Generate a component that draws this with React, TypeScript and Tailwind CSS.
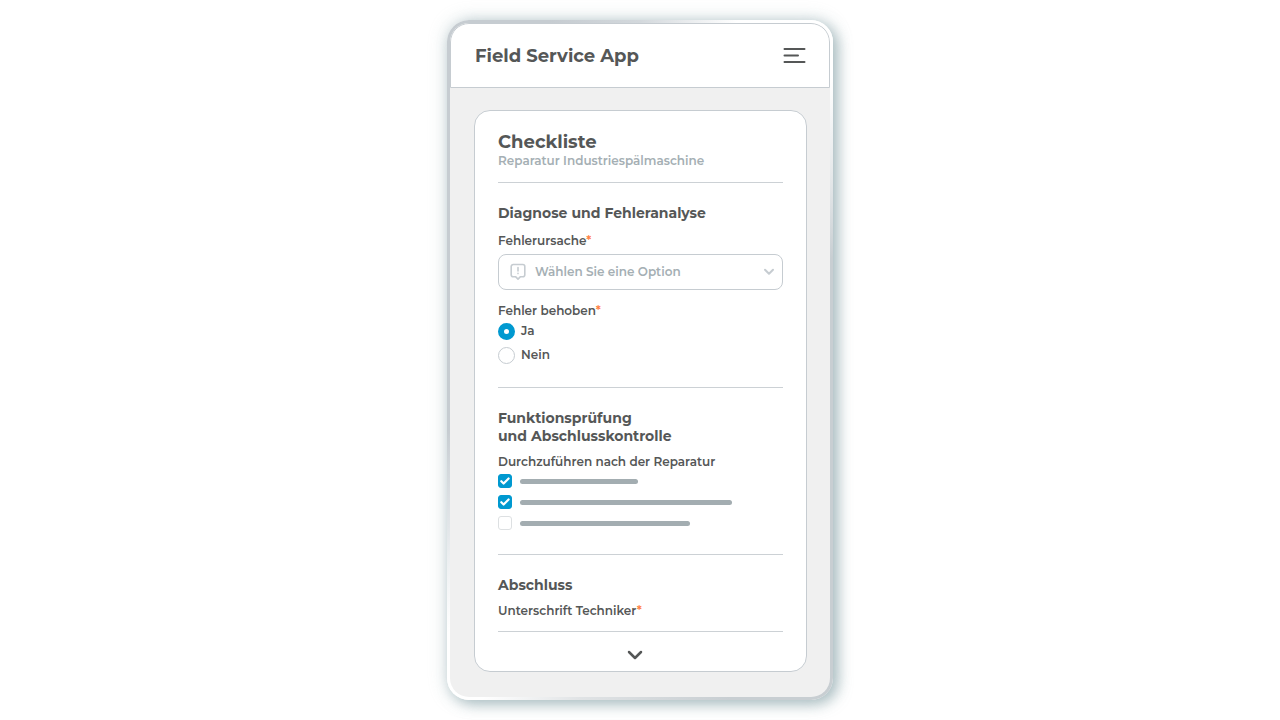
import { useState } from 'react';
import type { ReactNode } from 'react';

const tasks = [
  { id: 'task-1', name: 'Aufgabe 1', bar: 'w-[118px]', done: true },
  { id: 'task-2', name: 'Aufgabe 2', bar: 'w-[212px]', done: true },
  { id: 'task-3', name: 'Aufgabe 3', bar: 'w-[170px]', done: false },
];

function Required() {
  return <span className="text-[#ff7f45]">*</span>;
}

function Section({ title, children }: { title: ReactNode; children: ReactNode }) {
  return (
    <section className="border-t border-[#ccd1d5] pt-[21px]">
      <h3 className="text-sm leading-[18px] font-bold">{title}</h3>
      {children}
    </section>
  );
}

export default function App() {
  const [cause, setCause] = useState('');
  const [fixed, setFixed] = useState('ja');
  const [checked, setChecked] = useState(tasks.map((t) => t.done));

  const toggle = (index: number) => {
    setChecked(checked.map((c, i) => (i === index ? !c : c)));
  };

  return (
    <div className="min-h-screen bg-white py-5 font-['Montserrat','Inter',sans-serif] text-[#555757]">
      {/* Phone frame */}
      <div className="mx-auto w-full max-w-[386px] rounded-[22px] bg-[conic-gradient(#d3d8dc_0deg,#ffffff_16deg,#ffffff_34deg,#f0f2f3_40deg,#c8ced2_62deg,#c8ced2_165deg,#e0e3e5_190deg,#ffffff_205deg,#ffffff_215deg,#e3e7ea_228deg,#c6ccd1_250deg,#c6ccd1_345deg,#d3d8dc_360deg)] p-[3px] shadow-[5px_4px_14px_0px_rgba(130,158,164,0.6),0_0_18px_rgba(160,182,188,0.45)]">
        <div className="overflow-hidden rounded-[19px] bg-[#f0f0f0]">
          <header className="flex h-[65px] items-center justify-between rounded-t-[19px] border border-[#c6ccd1] bg-white pr-[23px] pl-6">
            <h1 className="text-lg leading-6 font-bold">Field Service App</h1>
            <button type="button" aria-label="Menü">
              <svg width="23" height="17" viewBox="0 0 23 17" fill="none" stroke="currentColor" strokeWidth="2" strokeLinecap="round">
                <path d="M1.5 2h20M1.5 8.5h13.5M1.5 15h20" />
              </svg>
            </button>
          </header>

          <main className="pt-[22px] pr-[23px] pb-[25px] pl-6">
            <div className="rounded-2xl border border-[#c6ccd1] bg-white px-[23px] pt-[21px]">
              <div className="pb-3">
                <h2 className="text-lg leading-5 font-bold">Checkliste</h2>
                <p className="text-xs leading-[18px] font-semibold text-[#a5afb4]">Reparatur Industriespälmaschine</p>
              </div>

              <Section title="Diagnose und Fehleranalyse">
                <label htmlFor="cause" className="mt-[11px] block text-xs leading-4 font-semibold">
                  Fehlerursache<Required />
                </label>
                <div className="relative mt-[5px]">
                  <select
                    id="cause"
                    value={cause}
                    onChange={(e) => setCause(e.target.value)}
                    className="block h-9 w-full appearance-none rounded-lg border border-[#c6ccd1] bg-white pr-8 pl-9 text-xs font-semibold text-[#a5afb4]"
                  >
                    <option value="">Wählen Sie eine Option</option>
                    <option value="mechanik">Mechanik</option>
                    <option value="elektrik">Elektrik</option>
                  </select>
                  <svg className="pointer-events-none absolute top-[9px] left-3" width="16" height="18" viewBox="0 0 16 18" fill="none" stroke="#c6ccd1" strokeWidth="1.6" strokeLinejoin="round" strokeLinecap="round">
                    <path d="M3.2 1.5h9.6a2 2 0 0 1 2 2v8.2a2 2 0 0 1-2 2h-2.3L8 16.1l-2.5-2.4H3.2a2 2 0 0 1-2-2V3.5a2 2 0 0 1 2-2Z" />
                    <path d="M8 4.6v3.4M8 10.4v.2" />
                  </svg>
                  <svg className="pointer-events-none absolute top-[14px] right-2" width="12" height="8" viewBox="0 0 12 8" fill="none" stroke="#c6ccd1" strokeWidth="2" strokeLinecap="round" strokeLinejoin="round">
                    <path d="M2 1.8l4 4 4-4" />
                  </svg>
                </div>

                <fieldset className="mt-[13px] pb-[23px]">
                  <legend className="text-xs leading-4 font-semibold">
                    Fehler behoben<Required />
                  </legend>
                  <div className="mt-[3px] flex flex-col gap-[6px]">
                    {[
                      { value: 'ja', label: 'Ja' },
                      { value: 'nein', label: 'Nein' },
                    ].map((o) => (
                      <label key={o.value} className="flex h-[18px] items-center gap-[6px] text-xs leading-4 font-semibold">
                        <input
                          type="radio"
                          name="fixed"
                          value={o.value}
                          checked={fixed === o.value}
                          onChange={() => setFixed(o.value)}
                          className="size-[17px] appearance-none rounded-full border border-[#c6ccd1] bg-white checked:border-[6px] checked:border-[#0099d0]"
                        />
                        {o.label}
                      </label>
                    ))}
                  </div>
                </fieldset>
              </Section>

              <Section title={<>Funktionsprüfung<br />und Abschlusskontrolle</>}>
                <p className="mt-[9px] text-xs leading-4 font-semibold">Durchzuführen nach der Reparatur</p>
                <ul className="mt-[3px] flex flex-col gap-[5px] pb-[23px]">
                  {tasks.map((task, i) => (
                    <li key={task.id}>
                      <label htmlFor={task.id} className="flex h-4 items-center gap-2">
                        <span className="grid size-[14px] place-items-center">
                          <input
                            id={task.id}
                            type="checkbox"
                            aria-label={task.name}
                            checked={checked[i]}
                            onChange={() => toggle(i)}
                            className="col-start-1 row-start-1 size-[14px] appearance-none rounded-[3px] border border-[#dde0e2] bg-white checked:border-[#0099d0] checked:bg-[#0099d0]"
                          />
                          {checked[i] && (
                            <svg className="pointer-events-none col-start-1 row-start-1" width="10" height="8" viewBox="0 0 10 8" fill="none" stroke="#fff" strokeWidth="2.2" strokeLinecap="round" strokeLinejoin="round">
                              <path d="M1.3 4.2l2.3 2.3 5-5" />
                            </svg>
                          )}
                        </span>
                        <span className={`h-[5px] rounded-full bg-[#a3adb1] ${task.bar}`} />
                      </label>
                    </li>
                  ))}
                </ul>
              </Section>

              <Section title="Abschluss">
                <p className="mt-[9px] pb-3 text-xs leading-4 font-semibold">
                  Unterschrift Techniker<Required />
                </p>
              </Section>

              <div className="flex h-10 items-center justify-center border-t border-[#ccd1d5] pt-[6px] pr-[11px]">
                <button type="button" aria-label="Mehr anzeigen">
                  <svg width="16" height="10" viewBox="0 0 16 10" fill="none" stroke="currentColor" strokeWidth="2.5" strokeLinecap="round" strokeLinejoin="round">
                    <path d="M2 2l6 6 6-6" />
                  </svg>
                </button>
              </div>
            </div>
          </main>
        </div>
      </div>
    </div>
  );
}
